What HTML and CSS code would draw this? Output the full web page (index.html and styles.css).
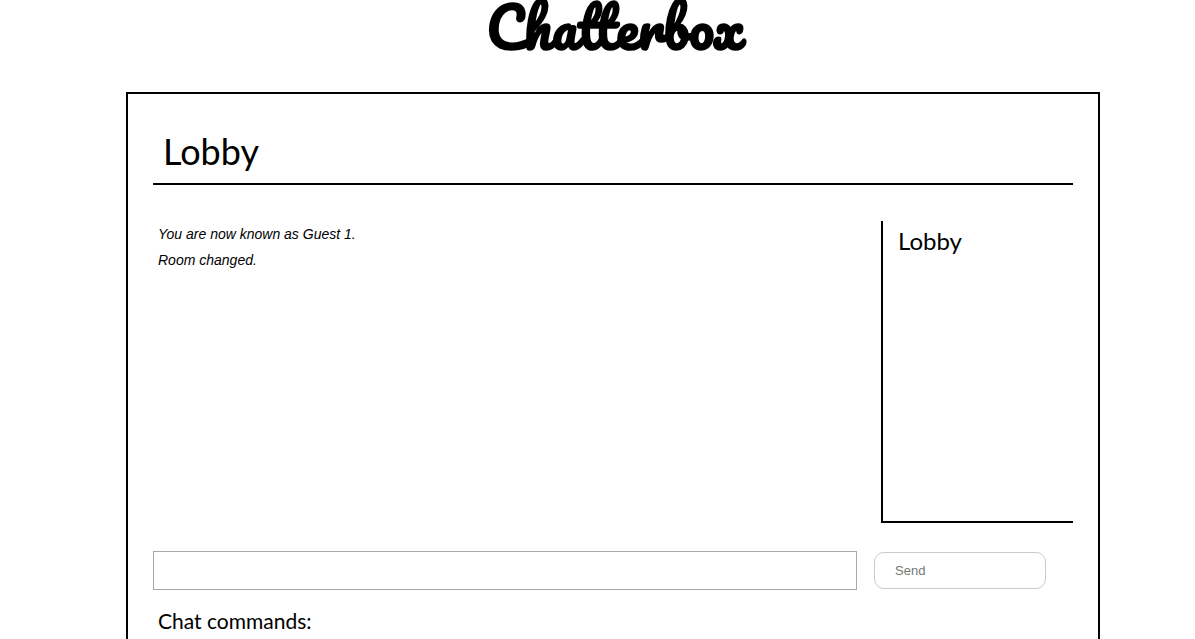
FILE: index.html
```html
<!DOCTYPE html>
<html lang="en">
<head>
<meta charset="utf-8">
<title>Chatterbox</title>
<link rel="stylesheet" href="styles.css">
</head>
<body>
<h1 class="logo">Chatterbox</h1>
<main class="panel">
  <h2 class="room">Lobby</h2>
  <div class="chat">
    <div class="messages">
      <p class="message">You are now known as Guest 1.</p>
      <p class="message">Room changed.</p>
    </div>
    <aside class="rooms">Lobby</aside>
  </div>
  <form class="send-form">
    <input class="send-text" type="text" aria-label="Message">
    <button class="send-button" type="button">Send</button>
  </form>
  <h3 class="help">Chat commands:</h3>
</main>
</body>
</html>
```
FILE: styles.css
```css
* {
  box-sizing: border-box;
}

body {
  margin: 0;
  background: #fff;
  color: #000;
  font-family: Lato, sans-serif;
}

.logo {
  height: 92px;
  margin: 0;
  padding-left: 36px;
  font-family: Pacifico, cursive;
  font-size: 55px;
  font-weight: 700;
  line-height: 54px;
  text-align: center;
}

.panel {
  margin: 0 95px 0 126px;
  padding: 25px 25px 40px;
  border: 2px solid #000;
}

.room {
  height: 66px;
  margin: 0 0 36px;
  padding: 10px 10px 0;
  border-bottom: 2px solid #000;
  font-size: 36px;
  font-weight: 400;
  line-height: 44px;
}

.chat {
  display: flex;
  height: 302px;
}

.messages {
  flex: 1;
  overflow: auto;
  padding-left: 5px;
}

.message {
  margin: 0;
  font-family: "Liberation Sans", Arial, sans-serif;
  font-size: 14px;
  font-style: italic;
  line-height: 26px;
}

.rooms {
  width: 192px;
  padding: 5px 15px;
  border: solid #000;
  border-width: 0 0 2px 2px;
  font-size: 24px;
  line-height: 30px;
}

.send-form {
  display: flex;
  align-items: center;
  gap: 17px;
  margin: 28px 27px 0 0;
}

.send-text {
  flex: 1;
  min-width: 0;
  height: 39px;
  padding: 8px;
  border: 1px solid #a9a9a9;
  font-size: 14px;
}

.send-button {
  width: 172px;
  height: 37px;
  padding: 0 20px;
  border: 1px solid #ccc;
  border-radius: 10px;
  background: #fff;
  color: #777;
  font-family: "Liberation Sans", Arial, sans-serif;
  font-size: 13px;
  text-align: left;
}

.help {
  margin: 17px 0 0;
  padding-left: 5px;
  font-size: 21px;
  font-weight: 400;
  line-height: 28px;
}
```
